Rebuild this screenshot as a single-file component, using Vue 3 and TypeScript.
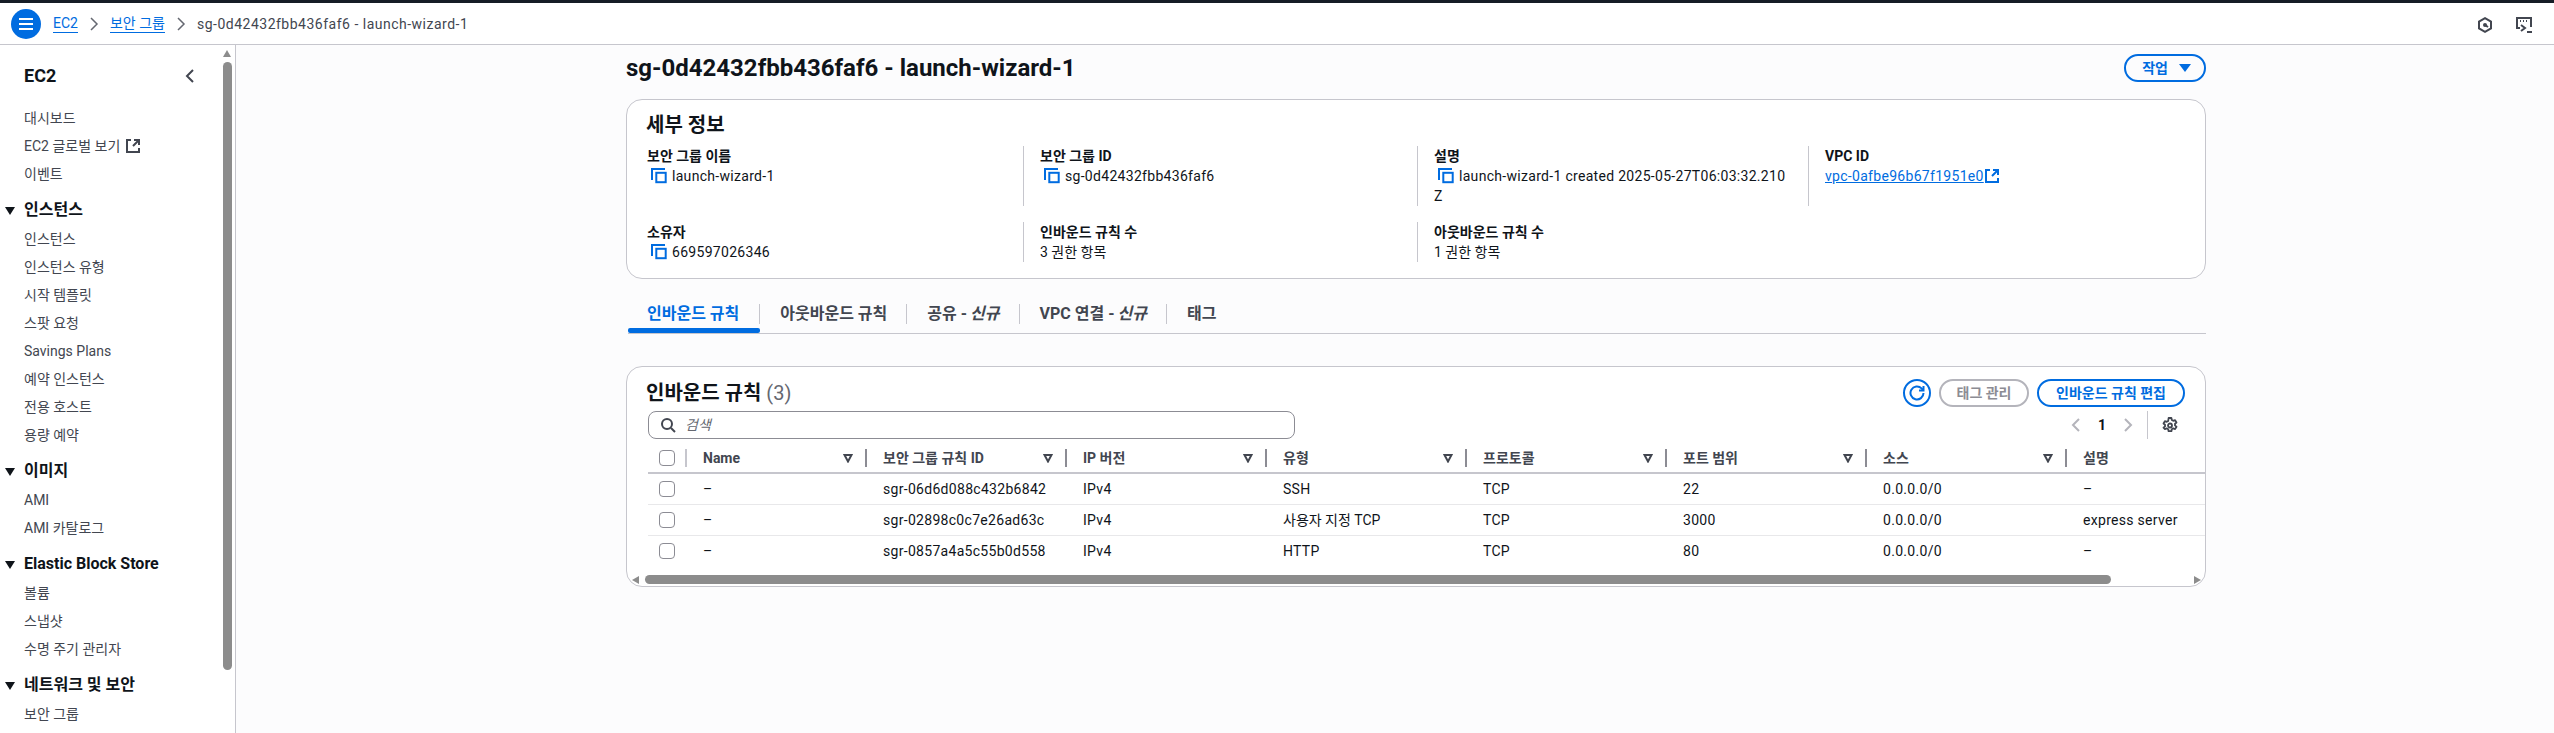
<script setup lang="ts">
interface NavGroup { title?: string; items: { label: string; ext?: boolean }[] }
const nav: NavGroup[] = [
  { items: [{ label: '대시보드' }, { label: 'EC2 글로벌 보기', ext: true }, { label: '이벤트' }] },
  { title: '인스턴스', items: ['인스턴스', '인스턴스 유형', '시작 템플릿', '스팟 요청', 'Savings Plans', '예약 인스턴스', '전용 호스트', '용량 예약'].map(label => ({ label })) },
  { title: '이미지', items: ['AMI', 'AMI 카탈로그'].map(label => ({ label })) },
  { title: 'Elastic Block Store', items: ['볼륨', '스냅샷', '수명 주기 관리자'].map(label => ({ label })) },
  { title: '네트워크 및 보안', items: ['보안 그룹'].map(label => ({ label })) }
]
const tabs = [
  { label: '인바운드 규칙', active: true },
  { label: '아웃바운드 규칙' },
  { label: '공유 -', em: '신규' },
  { label: 'VPC 연결 -', em: '신규' },
  { label: '태그' }
]
const columns = [
  { label: 'Name', width: 180 }, { label: '보안 그룹 규칙 ID', width: 200 }, { label: 'IP 버전', width: 200 },
  { label: '유형', width: 200 }, { label: '프로토콜', width: 200 }, { label: '포트 범위', width: 200 },
  { label: '소스', width: 200 }, { label: '설명', width: 200 }
]
const rows = [
  ['–', 'sgr-06d6d088c432b6842', 'IPv4', 'SSH', 'TCP', '22', '0.0.0.0/0', '–'],
  ['–', 'sgr-02898c0c7e26ad63c', 'IPv4', '사용자 지정 TCP', 'TCP', '3000', '0.0.0.0/0', 'express server'],
  ['–', 'sgr-0857a4a5c55b0d558', 'IPv4', 'HTTP', 'TCP', '80', '0.0.0.0/0', '–']
]
const isKorean = (v: string) => /[가-힣]/.test(v)
</script>

<template>
  <div class="page">
    <div class="topstrip"></div>
    <header class="navbar">
      <button class="burger" aria-label="메뉴">
        <svg width="16" height="14" viewBox="0 0 16 14"><path d="M1 2h14M1 7h14M1 12h14" stroke="#fff" stroke-width="2" fill="none" /></svg>
      </button>
      <a class="crumb">EC2</a>
      <svg class="sep" width="10" height="16" viewBox="0 0 10 16"><path d="M2 2l6 6-6 6" fill="none" stroke="#656871" stroke-width="1.5" /></svg>
      <a class="crumb">보안 그룹</a>
      <svg class="sep" width="10" height="16" viewBox="0 0 10 16"><path d="M2 2l6 6-6 6" fill="none" stroke="#656871" stroke-width="1.5" /></svg>
      <span class="crumb-cur">sg-0d42432fbb436faf6 - launch-wizard-1</span>
      <div class="nav-right">
        <svg width="16" height="16" viewBox="0 0 16 16"><path d="M8 1.2l6 3.4v6.8l-6 3.4-6-3.4V4.6z" fill="none" stroke="#424650" stroke-width="2" /><circle cx="8" cy="8" r="2" fill="#424650" /><path d="M8 8l3 2" stroke="#424650" stroke-width="2" /></svg>
        <svg width="18" height="18" viewBox="0 0 18 18"><path d="M5 12H2V2h14v9" fill="none" stroke="#424650" stroke-width="2" /><path d="M5 5h1M8 5h1M11 5h1" stroke="#424650" stroke-width="2" /><path d="M6 9l4 3-4 3" fill="none" stroke="#424650" stroke-width="2" /><path d="M12 16h5" stroke="#424650" stroke-width="2" /></svg>
      </div>
    </header>

    <div class="body">
      <aside class="sidebar">
        <div class="side-head">
          <span>EC2</span>
          <svg width="10" height="16" viewBox="0 0 10 16"><path d="M8 2L2 8l6 6" fill="none" stroke="#424650" stroke-width="2" /></svg>
        </div>
        <section v-for="(g, i) in nav" :key="i" class="side-group">
          <h3 v-if="g.title" class="side-title"><i class="tri"></i>{{ g.title }}</h3>
          <a v-for="it in g.items" :key="it.label" class="side-link">
            {{ it.label }}
            <svg v-if="it.ext" class="ext" width="16" height="16" viewBox="0 0 16 16"><path d="M6 2H2v12h12v-4" fill="none" stroke="#424650" stroke-width="2" /><path d="M9 2h5v5M14 2L8 8" fill="none" stroke="#424650" stroke-width="2" /></svg>
          </a>
        </section>
        <div class="vscroll">
          <i class="vs-up"></i>
          <i class="vs-thumb"></i>
        </div>
      </aside>

      <main class="main">
        <div class="title-row">
          <h1>sg-0d42432fbb436faf6 - launch-wizard-1</h1>
          <button class="btn btn-action">작업 <i class="tri tri-blue"></i></button>
        </div>

        <section class="card details">
          <h2>세부 정보</h2>
          <div class="detail-grid">
            <div class="cell first h60">
              <b>보안 그룹 이름</b>
              <div class="val lat"><svg class="copy" width="16" height="16" viewBox="0 0 16 16"><path d="M1 12V1h13" fill="none" stroke="#006ce0" stroke-width="2" /><rect x="5.3" y="4.8" width="9.4" height="9.4" fill="none" stroke="#006ce0" stroke-width="2" /></svg>launch-wizard-1</div>
            </div>
            <div class="cell h60">
              <b>보안 그룹 ID</b>
              <div class="val lat"><svg class="copy" width="16" height="16" viewBox="0 0 16 16"><path d="M1 12V1h13" fill="none" stroke="#006ce0" stroke-width="2" /><rect x="5.3" y="4.8" width="9.4" height="9.4" fill="none" stroke="#006ce0" stroke-width="2" /></svg>sg-0d42432fbb436faf6</div>
            </div>
            <div class="cell h60">
              <b>설명</b>
              <div class="val lat desc"><svg class="copy" width="16" height="16" viewBox="0 0 16 16"><path d="M1 12V1h13" fill="none" stroke="#006ce0" stroke-width="2" /><rect x="5.3" y="4.8" width="9.4" height="9.4" fill="none" stroke="#006ce0" stroke-width="2" /></svg>launch-wizard-1 created 2025-05-27T06:03:32.210Z</div>
            </div>
            <div class="cell h60">
              <b>VPC ID</b>
              <div class="val lat"><a class="link">vpc-0afbe96b67f1951e0</a>
                <svg class="ext" width="16" height="16" viewBox="0 0 16 16"><path d="M6 2H2v12h12v-4" fill="none" stroke="#006ce0" stroke-width="2" /><path d="M9 2h5v5M14 2L8 8" fill="none" stroke="#006ce0" stroke-width="2" /></svg>
              </div>
            </div>
            <div class="cell first">
              <b>소유자</b>
              <div class="val lat"><svg class="copy" width="16" height="16" viewBox="0 0 16 16"><path d="M1 12V1h13" fill="none" stroke="#006ce0" stroke-width="2" /><rect x="5.3" y="4.8" width="9.4" height="9.4" fill="none" stroke="#006ce0" stroke-width="2" /></svg>669597026346</div>
            </div>
            <div class="cell">
              <b>인바운드 규칙 수</b>
              <div class="val">3 권한 항목</div>
            </div>
            <div class="cell">
              <b>아웃바운드 규칙 수</b>
              <div class="val">1 권한 항목</div>
            </div>
          </div>
        </section>

        <nav class="tabs">
          <a v-for="t in tabs" :key="t.label" class="tab" :class="{ active: t.active }">
            <span>{{ t.label }}<em v-if="t.em">{{ t.em }}</em></span>
          </a>
        </nav>

        <section class="card rules">
          <div class="rules-head">
            <h2>인바운드 규칙 <span class="count">(3)</span></h2>
            <div class="rules-actions">
              <button class="btn icon-btn" aria-label="새로 고침">
                <svg width="16" height="16" viewBox="0 0 16 16"><path d="M14.5 8A6.5 6.5 0 1 1 12.6 3.4L14 5" fill="none" stroke="#006ce0" stroke-width="2" /><path d="M10 5.5h4.5V1" fill="none" stroke="#006ce0" stroke-width="2" /></svg>
              </button>
              <button class="btn btn-disabled">태그 관리</button>
              <button class="btn btn-edit">인바운드 규칙 편집</button>
            </div>
          </div>
          <div class="filter-row">
            <div class="search">
              <svg width="16" height="16" viewBox="0 0 16 16"><circle cx="7" cy="7" r="5" fill="none" stroke="#424650" stroke-width="2" /><path d="M11 11l4 4" stroke="#424650" stroke-width="2" /></svg>
              <span>검색</span>
            </div>
            <div class="pager">
              <svg width="10" height="16" viewBox="0 0 10 16"><path d="M8 2L2 8l6 6" fill="none" stroke="#b4b4bb" stroke-width="2" /></svg>
              <span>1</span>
              <svg width="10" height="16" viewBox="0 0 10 16"><path d="M2 2l6 6-6 6" fill="none" stroke="#b4b4bb" stroke-width="2" /></svg>
            </div>
            <div class="gear">
              <svg width="16" height="16" viewBox="0 0 16 16"><path d="M6.6 1h2.8l.4 2 1.4.8 1.9-.7 1.4 2.4-1.5 1.3v1.6l1.5 1.3-1.4 2.4-1.9-.7-1.4.8-.4 2H6.6l-.4-2-1.4-.8-1.9.7L1.5 10.7 3 9.4V7.8L1.5 6.5l1.4-2.4 1.9.7 1.4-.8z" fill="none" stroke="#424650" stroke-width="1.8" stroke-linejoin="round" /><circle cx="8" cy="8.5" r="2" fill="none" stroke="#424650" stroke-width="1.8" /></svg>
            </div>
          </div>
          <div class="table-wrap">
            <table>
              <thead>
                <tr>
                  <th class="chk"><i class="box"></i></th>
                  <th v-for="c in columns" :key="c.label" :style="{ width: c.width + 'px' }">
                    <div class="th-in">
                      <span>{{ c.label }}</span>
                      <svg v-if="c.label !== '설명'" width="10" height="10" viewBox="0 0 10 10"><path d="M1.5 2h7L5 8.5z" fill="none" stroke="#424650" stroke-width="2" /></svg>
                    </div>
                  </th>
                </tr>
              </thead>
              <tbody>
                <tr v-for="r in rows" :key="r[1]">
                  <td class="chk"><i class="box"></i></td>
                  <td v-for="(v, i) in r" :key="i" :class="{ lat: !isKorean(v) }">{{ v }}</td>
                </tr>
              </tbody>
            </table>
          </div>
          <div class="hscroll">
            <i class="hs-l"></i>
            <i class="hs-thumb"></i>
            <i class="hs-r"></i>
          </div>
        </section>
      </main>
    </div>
  </div>
</template>

<style>
html, body { margin: 0; background: #fff; }
</style>

<style scoped>
.page {
  width: 2554px; height: 733px; overflow: hidden; display: flex; flex-direction: column;
  font: 14px/20px Roboto, "Noto Sans CJK KR", sans-serif; color: #0f141a; background: #fcfcfd;
}
.lat { letter-spacing: 0.3px; }
.topstrip { height: 3px; background: #161d26; flex: none; }
.navbar {
  flex: none; display: flex; align-items: center; background: #fff;
  border-bottom: 1px solid #c6c6cd; height: 41px; padding-left: 11px;
}
.burger {
  width: 30px; height: 30px; border-radius: 50%; border: 0; background: #006ce0; padding: 0;
  display: flex; align-items: center; justify-content: center; margin-right: 12px;
}
.crumb { color: #006ce0; border-bottom: 1px solid #006ce0; line-height: 18px; }
.sep { margin: 0 11px; }
.crumb-cur { color: #424650; letter-spacing: 0.5px; }
.nav-right { margin-left: auto; margin-top: 2px; display: flex; align-items: center; gap: 22px; padding-right: 21px; }
.body { flex: 1; display: flex; min-height: 0; }
.sidebar {
  position: relative; width: 235px; flex: none; background: #fff; border-right: 1px solid #c6c6cd;
  overflow: hidden; padding-top: 18px; box-sizing: content-box;
}
.side-head {
  display: flex; align-items: center; justify-content: space-between; height: 26px;
  padding: 0 40px 0 24px; font-size: 18px; font-weight: 700; margin-bottom: 15px;
}
.side-group { margin-bottom: 6px; padding-left: 24px; }
.side-title {
  position: relative; margin: 0 0 3px; font-size: 16px; line-height: 24px; font-weight: 700; padding: 4px 0 0;
}
.tri {
  display: inline-block; width: 0; height: 0; border-left: 5px solid transparent; border-right: 5px solid transparent;
  border-top: 8px solid #0f141a;
}
.side-title .tri { position: absolute; left: -19px; top: 13px; }
.side-link { display: flex; align-items: center; gap: 5px; height: 28px; color: #424650; }
.vscroll { position: absolute; right: 3px; top: 0; bottom: 0; width: 9px; }
.vs-up {
  position: absolute; left: 0; top: 5px; width: 0; height: 0; border-left: 4.5px solid transparent;
  border-right: 4.5px solid transparent; border-bottom: 7px solid #8c8c8c;
}
.vs-thumb { position: absolute; left: 0; top: 17px; width: 9px; height: 608px; border-radius: 5px; background: #8c8c8c; }

.main { flex: 1; padding-left: 390px; padding-right: 348px; min-width: 0; }
.title-row { display: flex; align-items: center; justify-content: space-between; height: 28px; margin-top: 9px; }
h1 { margin: 0; font-size: 24px; line-height: 28px; font-weight: 700; }
.btn {
  font: inherit; font-weight: 700; background: transparent; border: 2px solid #006ce0; color: #006ce0;
  border-radius: 20px; padding: 0 20px; height: 28px; box-sizing: border-box; display: inline-flex;
  align-items: center; line-height: 1;
}
.btn-action { gap: 11px; padding: 0 13px 0 16px; font-size: 14px; }
.tri-blue { border-top-color: #006ce0; border-left-width: 6px; border-right-width: 6px; }
.card { background: #fff; border: 1px solid #c6c6cd; border-radius: 16px; box-sizing: border-box; }
.details { margin-top: 17px; height: 180px; padding: 12px 20px 0; }
h2 { margin: 0 0 0 -1px; font-size: 20px; line-height: 26px; font-weight: 700; }
.detail-grid { display: grid; grid-template-columns: 376px 394px 391px 1fr; row-gap: 16px; margin-top: 8px; }
.cell { border-left: 1px solid #c6c6cd; padding-left: 16px; min-height: 40px; }
.cell.first { border-left: 0; padding-left: 0; }
.h60 { height: 60px; }
.cell b { display: block; font-weight: 700; }
.val { display: block; color: #0f141a; }
.copy { vertical-align: -3px; margin: 0 5px 0 4px; }
.desc { width: 355px; word-break: break-all; }
.link { color: #006ce0; text-decoration: underline; }
.ext { vertical-align: -3px; }
.tabs {
  display: flex; height: 34px; margin-top: 20px; border-bottom: 1px solid #c6c6cd; margin-left: 2px;
}
.tab { position: relative; padding: 5px 20px 0; font-size: 16px; font-weight: 700; color: #424650; line-height: 20px; height: 34px; box-sizing: border-box; }
.tab:first-child { padding: 5px 21px 0 19px; }
.tab:not(:last-child)::after {
  content: ""; position: absolute; right: 0; top: 5px; height: 20px; width: 1px; background: #c6c6cd;
}
.tab em { font-style: italic; margin-left: 3px; }
.tab.active { color: #006ce0; }
.tab.active::before {
  content: ""; position: absolute; left: 0; right: 0; bottom: 0; height: 5px; background: #006ce0; border-radius: 2px;
}
.rules { margin-top: 32px; height: 221px; padding: 0; position: relative; overflow: hidden; }
.rules-head { display: flex; align-items: center; justify-content: space-between; padding: 12px 20px 0; height: 28px; box-sizing: content-box; }
.count { font-weight: 400; color: #656871; }
.rules-actions { display: flex; gap: 8px; align-items: center; }
.icon-btn { width: 28px; padding: 0; justify-content: center; }
.btn-disabled { border-color: #b4b4bb; color: #8c8c94; width: 90px; padding: 0; justify-content: center; }
.btn-edit { width: 148px; padding: 0; justify-content: center; }
.filter-row { display: flex; align-items: center; height: 28px; margin-top: 4px; padding-left: 21px; }
.search {
  width: 647px; height: 28px; box-sizing: border-box; border: 1px solid #8c8c94; border-radius: 8px; display: flex;
  align-items: center; gap: 9px; padding-left: 11px; font-style: italic; color: #656871; flex: none;
}
.pager { margin-left: auto; display: flex; align-items: center; gap: 17px; font-weight: 700; }
.gear { margin-left: 14px; margin-right: 27px; height: 28px; border-left: 1px solid #c6c6cd; padding-left: 14px; display: flex; align-items: center; }
.table-wrap { margin-top: 4px; margin-left: 21px; overflow: hidden; }
table { border-collapse: collapse; table-layout: fixed; width: 1618px; }
th { height: 30px; padding: 0; font-weight: 700; text-align: left; color: #424650; border-bottom: 2px solid #c6c6cd; box-sizing: border-box; position: relative; }
td { height: 31px; padding: 0 0 0 17px; border-bottom: 1px solid #e8e8ea; box-sizing: border-box; color: #0f141a; }
tbody tr:last-child td { border-bottom: 0; }
.chk { width: 38px; padding: 0; }
th:not(:first-child)::before {
  content: ""; position: absolute; left: -1px; top: 6px; height: 18px; width: 2px; background: #8c8c94;
}
th:nth-child(2)::before { background: #c6c6cd; }
.th-in { display: flex; align-items: center; justify-content: space-between; padding: 0 13px 0 17px; }
.box {
  display: block; width: 16px; height: 16px; margin-left: 11px; box-sizing: border-box; border: 1px solid #8c8c94; border-radius: 4px; background: #fff;
}
.hscroll { position: absolute; left: 0; right: 0; top: 208px; height: 9px; }
.hs-thumb { position: absolute; left: 18px; top: 0; width: 1466px; height: 9px; border-radius: 5px; background: #8c8c8c; }
.hs-l, .hs-r { position: absolute; top: 1px; width: 0; height: 0; border-top: 4px solid transparent; border-bottom: 4px solid transparent; }
.hs-l { left: 5px; border-right: 7px solid #8c8c8c; }
.hs-r { right: 4px; border-left: 7px solid #8c8c8c; }
</style>
